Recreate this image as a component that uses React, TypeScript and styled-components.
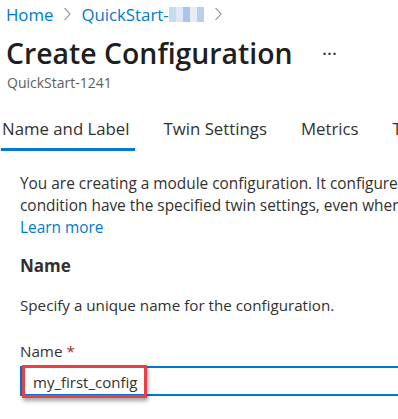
import React from 'react'
import styled, { createGlobalStyle } from 'styled-components'

const Colors = {
  Text: '#323130',
  Muted: '#605e5c',
  Link: '#0078d4',
  Chevron: '#8a8886',
  Required: '#a4262c',
  Highlight: '#e8404a',
}

const GlobalStyle = createGlobalStyle`
  html, body {
    margin: 0;
    padding: 0;
    background: #ffffff;
    overflow: hidden;
  }
  body {
    font-family: 'Open Sans', 'Noto Sans', sans-serif;
    color: ${Colors.Text};
  }
`

const tabs = ['Name and Label', 'Twin Settings', 'Metrics', 'Target Devices']

export default function App() {
  return (
    <Page>
      <GlobalStyle />
      <Breadcrumb>
        <Crumb>Home</Crumb>
        <Chevron />
        <Crumb>QuickStart-</Crumb>
        <Blur>
          <i style={{ background: '#c7daf2' }} />
          <i style={{ background: '#dfe8f7' }} />
          <i style={{ background: '#a8c6ec' }} />
          <i style={{ background: '#e6edf8' }} />
          <i style={{ background: '#b8d0ef' }} />
        </Blur>
        <Chevron />
      </Breadcrumb>
      <Header>
        <Title>Create Configuration</Title>
        <More>···</More>
      </Header>
      <Subtitle>QuickStart-1241</Subtitle>
      <TabBar>
        {tabs.map((t, i) => (
          <Tab key={t} $active={i === 0}>
            {t}
          </Tab>
        ))}
      </TabBar>
      <Content>
        <Paragraph>
          <Line>You are creating a module configuration. It configures the devices that meet the target</Line>
          <Line>condition have the specified twin settings, even when new devices are added.</Line>
          <Link>Learn more</Link>
        </Paragraph>
        <SectionTitle>Name</SectionTitle>
        <Hint>Specify a unique name for the configuration.</Hint>
        <Field>
          <Label>
            Name <Star>*</Star>
          </Label>
          <InputBox>
            <Highlight>my_first_config</Highlight>
          </InputBox>
        </Field>
      </Content>
    </Page>
  )
}

const Chevron = () => (
  <ChevronSvg width="10" height="16" viewBox="0 0 10 16">
    <path d="M2.5 2 L8 8 L2.5 14" fill="none" stroke={Colors.Chevron} strokeWidth="1.1" />
  </ChevronSvg>
)

const Page = styled.div`
  width: 398px;
  height: 419px;
  overflow: hidden;
`

const Breadcrumb = styled.nav`
  display: flex;
  align-items: center;
  gap: 9px;
  height: 28px;
  padding-left: 6px;
  white-space: nowrap;
`

const Crumb = styled.span`
  font-size: 16.8px;
  color: ${Colors.Link};
`

const ChevronSvg = styled.svg`
  flex: none;
`

const Blur = styled.span`
  display: inline-flex;
  margin-left: -9px;
  filter: blur(0.6px);
  i {
    display: block;
    width: 7px;
    height: 15px;
  }
`

const Header = styled.div`
  display: flex;
  align-items: center;
  gap: 30px;
  padding-left: 6px;
  margin-top: 5px;
  white-space: nowrap;
`

const Title = styled.h1`
  margin: 0;
  font-size: 28.4px;
  font-weight: 600;
  line-height: 40px;
  color: #201f1e;
`

const More = styled.span`
  font-size: 14px;
  letter-spacing: 1px;
  color: ${Colors.Text};
  font-weight: 700;
`

const Subtitle = styled.div`
  padding-left: 7px;
  font-size: 14px;
  line-height: 20px;
  color: ${Colors.Muted};
`

const TabBar = styled.div`
  display: flex;
  gap: 28px;
  margin-top: 24px;
  padding-left: 1px;
  white-space: nowrap;
`

const Tab = styled.div<{ $active?: boolean }>`
  font-size: 16.8px;
  line-height: 24px;
  padding: 0 5px 7px 1px;
  color: ${Colors.Text};
  border-bottom: 3px solid ${(p) => (p.$active ? Colors.Link : 'transparent')};
`

const Content = styled.div`
  padding-left: 20px;
  padding-top: 22px;
`

const Paragraph = styled.div`
  font-size: 15.4px;
  line-height: 22px;
`

const Line = styled.div`
  white-space: nowrap;
`

const Link = styled.div`
  color: ${Colors.Link};
`

const SectionTitle = styled.h2`
  margin: 15px 0 0;
  font-size: 17px;
  font-weight: 700;
  line-height: 24px;
`

const Hint = styled.p`
  margin: 16px 0 0;
  font-size: 15.2px;
  line-height: 22px;
`

const Field = styled.div`
  margin-top: 24px;
`

const Label = styled.div`
  font-size: 15.2px;
  line-height: 22px;
`

const Star = styled.span`
  color: ${Colors.Required};
`

const InputBox = styled.div`
  margin-top: 4px;
  height: 26px;
  width: 420px;
  border: 2px solid ${Colors.Link};
  border-right: none;
  position: relative;
`

const Highlight = styled.span`
  position: absolute;
  left: 0;
  top: -3px;
  height: 27px;
  padding: 0 7px 0 8px;
  display: flex;
  align-items: center;
  font-size: 15px;
  color: ${Colors.Text};
  border: 3px solid ${Colors.Highlight};
  box-shadow: 1px 3px 4px rgba(0, 0, 0, 0.35);
`
